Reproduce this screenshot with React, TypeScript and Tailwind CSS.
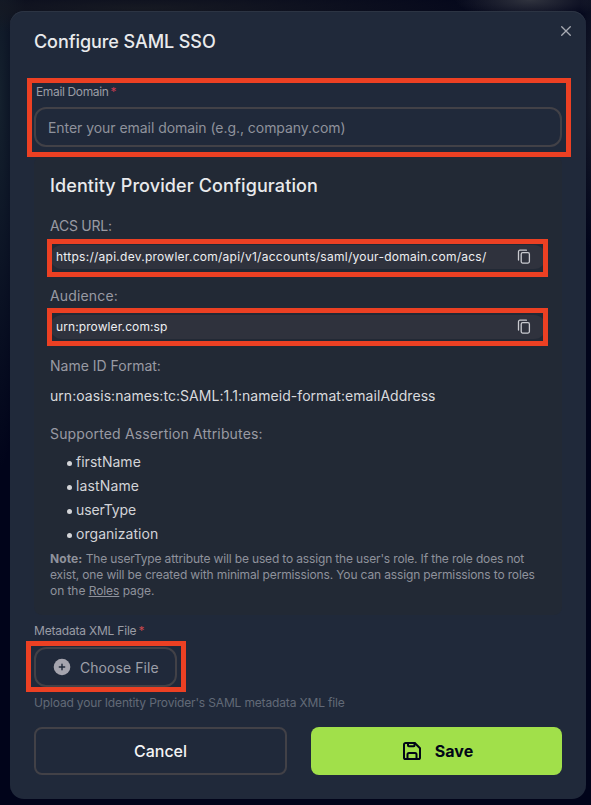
import type { ReactNode } from "react";

function Highlight({ className }: { className: string }) {
  return <div className={`pointer-events-none absolute border-[5px] border-[#ec4023] ${className}`} />;
}

function CopyIcon() {
  return (
    <svg width="14" height="16" viewBox="0 0 14 16" fill="none" stroke="#c9cacf" strokeWidth="1.3" strokeLinejoin="round" strokeLinecap="round">
      <rect x="4.2" y="3.7" width="8.2" height="10.4" rx="1.5" />
      <path d="M1.5 11V2.700C1.5 1.800 2.100 1.200 3 1.200h6.400" />
    </svg>
  );
}

function Snippet({ children, textClass, boxClass }: { children: ReactNode; textClass: string; boxClass: string }) {
  return (
    <div className="relative flex h-6 w-[496px] items-center justify-between rounded-xl bg-[#2f323d] pr-[15px] pl-[6px]">
      <span className={`whitespace-nowrap text-[12px] text-[#eeeff1] ${textClass}`}>{children}</span>
      <CopyIcon />
      <Highlight className={boxClass} />
    </div>
  );
}

function Label({ children, className }: { children: ReactNode; className: string }) {
  return <div className={`h-5 whitespace-nowrap text-[14px] leading-5 text-[#999aa3] ${className}`}>{children}</div>;
}

const attributes = [
  { name: "firstName", track: "tracking-[0.02px]" },
  { name: "lastName", track: "tracking-[0.14px]" },
  { name: "userType", track: "tracking-[-0.12px]" },
  { name: "organization", track: "tracking-[0.04px]" },
];

export default function App() {
  return (
    <div className="h-[805px] w-[591px] overflow-hidden bg-[#01041a] bg-[radial-gradient(ellipse_75px_20px_at_530px_0px,#30333e,transparent),radial-gradient(ellipse_430px_26px_at_140px_8px,#161922,transparent),radial-gradient(ellipse_26px_370px_at_0px_100px,#14202d,transparent),radial-gradient(ellipse_14px_150px_at_591px_100px,#171c2a,transparent)] pt-[11px] pl-[10px] font-['Inter','Liberation_Sans',sans-serif]">
      <main className="relative flex h-[788px] w-[576px] flex-col rounded-[14px] bg-[#20293a] px-6 shadow-[inset_0_1px_0_#2c3443]">
        <h1 className="mt-[17px] h-7 whitespace-nowrap text-[18px] leading-7 font-medium tracking-[-0.08px] text-[#e9eaec]">Configure SAML SSO</h1>
        <button aria-label="Close" className="absolute top-[14px] right-[14px]">
          <svg width="12" height="12" viewBox="0 0 12 12" stroke="#a8abb3" strokeWidth="1.3" strokeLinecap="round" className="block">
            <path d="M1.7 1.7l8.6 8.6M10.3 1.7l-8.6 8.6" />
          </svg>
        </button>

        <section className="relative mt-[28px]">
          <label className="block h-4 pl-0.5 text-[12px] leading-4 tracking-[-0.35px] text-[#9a9ca5]">
            Email Domain <span className="-ml-px text-[#c93a51]">*</span>
          </label>
          <div className="mt-[7px] flex h-10 items-center rounded-xl border-2 border-[#424147] px-3 text-[14px] tracking-[-0.05px] whitespace-nowrap text-[#8f929c]">
            Enter your email domain (e.g., company.com)
          </div>
          <Highlight className="-top-[6px] -left-[7px] h-[79px] w-[544px]" />
        </section>

        <section className="mt-[9px] h-[459px] rounded-lg bg-[#222935] px-4 pt-4">
          <h2 className="h-7 whitespace-nowrap text-[18px] leading-7 font-medium tracking-[0.11px] text-[#e9eaec]">Identity Provider Configuration</h2>
          <Label className="mt-4 mb-[9px] tracking-[-0.25px]">ACS URL:</Label>
          <Snippet textClass="tracking-[0.265px]" boxClass="-top-[6px] -left-[3px] h-[38px] w-[501px]">
            https://api.dev.prowler.com/api/v1/accounts/saml/your-domain.com/acs/
          </Snippet>
          <Label className="mt-[17px] mb-[9px] tracking-[0.15px]">Audience:</Label>
          <Snippet textClass="tracking-[0.1px]" boxClass="-top-[7px] -left-[3px] h-[38px] w-[501px]">
            urn:prowler.com:sp
          </Snippet>
          <Label className="mt-[17px]">Name ID Format:</Label>
          <div className="mt-[10px] h-5 whitespace-nowrap text-[14px] leading-5 tracking-[0.05px] text-[#d9dadd]">
            <span>urn:oasis:names:tc:SAML:1.1:nameid-format:emailAddress</span>
          </div>
          <Label className="mt-[18px] tracking-[0.15px]">Supported Assertion Attributes:</Label>
          <ul className="mt-[6px] pl-[17px] text-[14px] leading-6 text-[#d3d4d8]">
            {attributes.map((a) => (
              <li key={a.name} className="flex h-6 items-center gap-1">
                <span className="mt-[3px] size-[5px] rounded-full bg-current" />
                <span className={a.track}>{a.name}</span>
              </li>
            ))}
          </ul>
          <p className="mt-[5px] text-[12px] leading-4 whitespace-nowrap text-[#8f929c]">
            <span className="block tracking-[-0.155px]"><strong className="font-bold tracking-[0.1px]">Note:</strong> The userType attribute will be used to assign the user's role. If the role does not</span>
            <span className="block tracking-[-0.14px]">exist, one will be created with minimal permissions. You can assign permissions to roles</span>
            <span className="block tracking-[-0.06px]">on the <a className="underline">Roles</a> page.</span>
          </p>
        </section>

        <section className="relative mt-2">
          <label className="block h-4 text-[12px] leading-4 tracking-[-0.2px] text-[#9a9ca5]">
            Metadata XML File <span className="-ml-px text-[#c9474c]">*</span>
          </label>
          <button className="relative mt-2 flex h-10 w-[143px] items-center rounded-xl border-2 border-[#424147] pl-[17px] text-[14px] tracking-[0.06px] text-[#9d9fa8]">
            <svg width="18" height="18" viewBox="0 0 18 18" className="mr-[9px]">
              <circle cx="9" cy="9" r="8.3" fill="#a5a4ae" />
              <path d="M9 6.3v5.4M6.3 9h5.4" stroke="#20293a" strokeWidth="1.4" strokeLinecap="round" />
            </svg>
            <span className="mt-px whitespace-nowrap">Choose File</span>
            <Highlight className="-top-[8px] -left-[10px] h-[51px] w-[160px]" />
          </button>
          <p className="mt-2 h-4 whitespace-nowrap text-[12px] leading-4 tracking-[-0.155px] text-[#626977]">Upload your Identity Provider's SAML metadata XML file</p>
        </section>

        <footer className="mt-4 flex h-12 gap-6">
          <button className="w-[253px] rounded-lg border-2 border-[#424147] text-[16px] font-medium text-[#f3f4f5]">Cancel</button>
          <button className="flex w-[251px] items-center justify-center gap-[13px] rounded-lg bg-[#a1e04a] pl-[2px] text-[16px] font-bold text-[#020617]">
            <svg width="20" height="20" viewBox="0 0 20 20" fill="none" stroke="currentColor" strokeWidth="2" strokeLinejoin="round" strokeLinecap="round">
              <path d="M3.6 2h9.2L18 7.2v9.2a1.6 1.6 0 0 1-1.6 1.6H3.6A1.6 1.6 0 0 1 2 16.4V3.6A1.6 1.6 0 0 1 3.6 2Z" />
              <path d="M6 2v2.5a.8.8 0 0 0 .8.8h4.9a.8.8 0 0 0 .8-.8V2M5.5 18v-4.5A1.5 1.5 0 0 1 7 12h6a1.5 1.5 0 0 1 1.5 1.5V18" />
            </svg>
            <span>Save</span>
          </button>
        </footer>
      </main>
    </div>
  );
}
